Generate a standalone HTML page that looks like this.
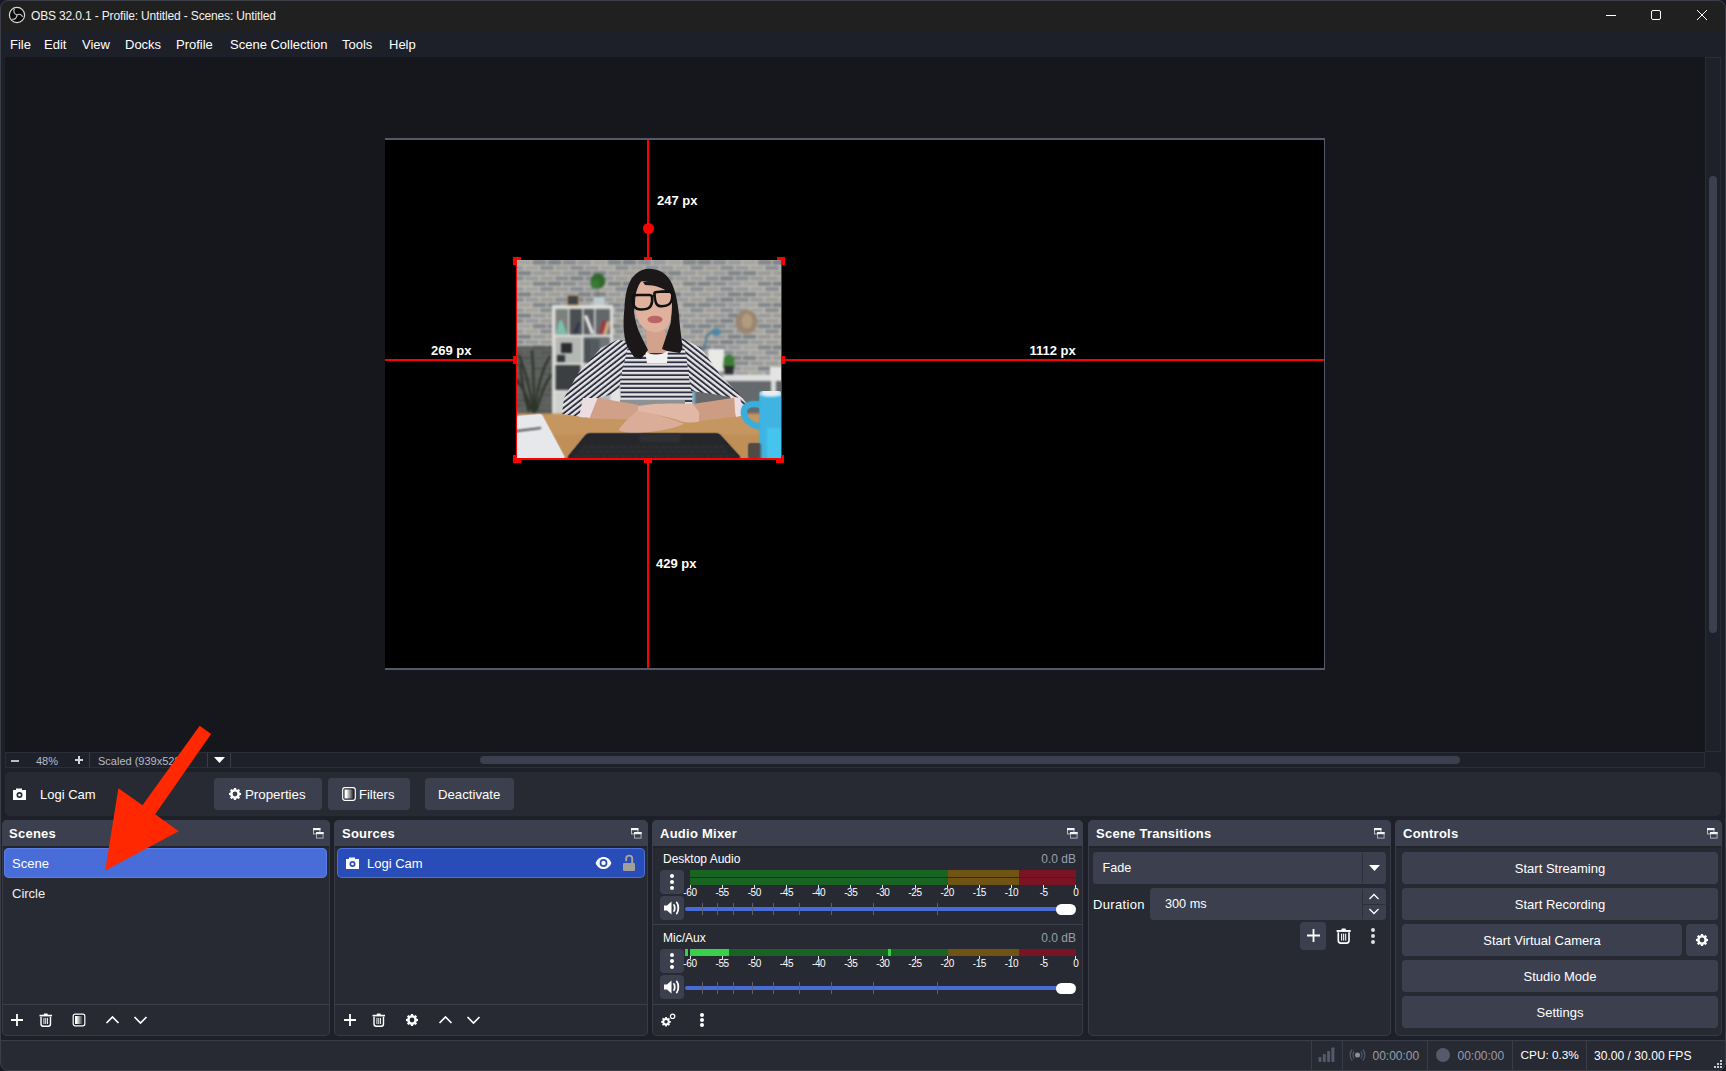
<!DOCTYPE html>
<html><head><meta charset="utf-8">
<style>
*{box-sizing:border-box;margin:0;padding:0}
html,body{width:1726px;height:1071px;overflow:hidden;background:#141828}
body{font-family:"Liberation Sans",sans-serif;color:#fff;position:relative}
.a{position:absolute}
.t{position:absolute;white-space:nowrap;line-height:1}
#win{left:0;top:0;width:1726px;height:1071px;background:#1e2029;border-radius:8px;overflow:hidden;}
.dock{position:absolute;background:#272a33;border-radius:5px;box-shadow:inset 0 0 0 1px #383b47;top:820px;height:216px}
.dh{position:absolute;left:0;top:0;right:0;height:26px;background:#3c404e;border-radius:5px 5px 0 0}
.dt{position:absolute;left:8px;top:827px;font-weight:bold;font-size:13px;letter-spacing:0.25px;line-height:1;white-space:nowrap}
.fl{position:absolute;top:8px;width:11px;height:11px}
.lbl{font-size:13px;font-weight:bold;color:#fff;text-shadow:0 0 1px #000}
.ml{font-size:10px;letter-spacing:-0.4px;color:#fff}
.btn{position:absolute;background:#3c404e;border-radius:4px}
.sep{position:absolute;background:#3a3d49}
.menu span{position:absolute;top:38px;font-size:13px;line-height:1;white-space:nowrap;color:#fff}
.cb{position:absolute;left:1402px;width:316px;height:32px;background:#3c404e;border-radius:4px;font-size:13px;line-height:32px;padding-top:0.5px;text-align:center;color:#fff}
</style></head>
<body>
<div id="win" class="a">
  <!-- title bar -->
  <div class="a" style="left:0;top:0;width:1726px;height:31px;background:#202020"></div>
  <svg class="a" style="left:8px;top:6px" width="18" height="18" viewBox="0 0 18 18">
    <circle cx="9" cy="9" r="7.6" fill="#0c0c0c" stroke="#d8d8d8" stroke-width="1.2"/>
    <path d="M9 9 C6 8 5 5 6.5 3 M9 9 C11 7.5 14 8.5 14.5 11 M9 9 C9 12 6.5 14 4 13" stroke="#cfcfcf" stroke-width="1.1" fill="none"/>
  </svg>
  <div class="t" style="left:31px;top:10px;font-size:12px;color:#f2f2f2;letter-spacing:-0.15px">OBS 32.0.1 - Profile: Untitled - Scenes: Untitled</div>
  <div class="a" style="left:1606px;top:15px;width:10px;height:1px;background:#fff"></div>
  <div class="a" style="left:1651px;top:10px;width:10px;height:10px;border:1px solid #fff;border-radius:2px"></div>
  <svg class="a" style="left:1696px;top:9px" width="12" height="12" viewBox="0 0 12 12"><path d="M1 1L11 11M11 1L1 11" stroke="#fff" stroke-width="1"/></svg>

  <!-- menu -->
  <div class="menu">
    <span style="left:10px">File</span><span style="left:44px">Edit</span><span style="left:82px">View</span><span style="left:125px">Docks</span><span style="left:176px">Profile</span><span style="left:230px">Scene Collection</span><span style="left:342px">Tools</span><span style="left:389px">Help</span>
  </div>

  <!-- preview -->
  <div class="a" style="left:5px;top:57px;width:1700px;height:695px;background:#16171c"></div>
  <div id="canvas" class="a" style="left:385px;top:138px;width:940px;height:532px;background:#000;border-top:2px solid #555866;border-right:1px solid #555866;border-bottom:2px solid #555866"></div>
    <!-- guides -->
  <div class="a" style="left:647px;top:140px;width:2px;height:120px;background:#f00"></div>
  <div class="a" style="left:647px;top:458px;width:2px;height:210px;background:#f00"></div>
  <div class="a" style="left:385px;top:359px;width:132px;height:2px;background:#f00"></div>
  <div class="a" style="left:781px;top:359px;width:543px;height:2px;background:#f00"></div>
  <div class="a" style="left:516px;top:260px;width:1px;height:198px;background:#f00"></div>
  <div class="a" style="left:781px;top:260px;width:1px;height:198px;background:#f00"></div>
  <div class="a" style="left:516px;top:458px;width:266px;height:2px;background:#f00"></div>
  <div class="a" style="left:643px;top:223px;width:11px;height:11px;border-radius:50%;background:#f00"></div>
  <div class="a" style="left:513px;top:257px;width:8px;height:8px;background:#f00"></div>
  <div class="a" style="left:644px;top:257px;width:8px;height:8px;background:#f00"></div>
  <div class="a" style="left:777px;top:257px;width:8px;height:8px;background:#f00"></div>
  <div class="a" style="left:513px;top:356px;width:8px;height:8px;background:#f00"></div>
  <div class="a" style="left:777px;top:356px;width:8px;height:8px;background:#f00"></div>
  <div class="a" style="left:513px;top:455px;width:8px;height:8px;background:#f00"></div>
  <div class="a" style="left:644px;top:455px;width:8px;height:8px;background:#f00"></div>
  <div class="a" style="left:776px;top:455px;width:8px;height:8px;background:#f00"></div>
<svg class="a" style="left:517px;top:260px" width="264" height="198" viewBox="0 0 264 198">
<defs>
<pattern id="brick" width="75" height="21.2" patternUnits="userSpaceOnUse"><rect width="75" height="21.2" fill="#cdc9bf"/><rect x="0.5" y="0.5" width="13.9" height="4.2" fill="#a3a29e"/><rect x="15.5" y="0.5" width="13.9" height="4.2" fill="#7d8388"/><rect x="30.5" y="0.5" width="13.9" height="4.2" fill="#7a7f84"/><rect x="45.5" y="0.5" width="13.9" height="4.2" fill="#868a8f"/><rect x="60.5" y="0.5" width="13.9" height="4.2" fill="#95979a"/><rect x="-7.0" y="5.8" width="13.9" height="4.2" fill="#95979a"/><rect x="8.0" y="5.8" width="13.9" height="4.2" fill="#a3a29e"/><rect x="23.0" y="5.8" width="13.9" height="4.2" fill="#868a8f"/><rect x="38.0" y="5.8" width="13.9" height="4.2" fill="#9c9a96"/><rect x="53.0" y="5.8" width="13.9" height="4.2" fill="#868a8f"/><rect x="68.0" y="5.8" width="13.9" height="4.2" fill="#95979a"/><rect x="0.5" y="11.1" width="13.9" height="4.2" fill="#7a7f84"/><rect x="15.5" y="11.1" width="13.9" height="4.2" fill="#95979a"/><rect x="30.5" y="11.1" width="13.9" height="4.2" fill="#9c9a96"/><rect x="45.5" y="11.1" width="13.9" height="4.2" fill="#95979a"/><rect x="60.5" y="11.1" width="13.9" height="4.2" fill="#7a7f84"/><rect x="-7.0" y="16.4" width="13.9" height="4.2" fill="#868a8f"/><rect x="8.0" y="16.4" width="13.9" height="4.2" fill="#95979a"/><rect x="23.0" y="16.4" width="13.9" height="4.2" fill="#9c9a96"/><rect x="38.0" y="16.4" width="13.9" height="4.2" fill="#868a8f"/><rect x="53.0" y="16.4" width="13.9" height="4.2" fill="#7a7f84"/><rect x="68.0" y="16.4" width="13.9" height="4.2" fill="#868a8f"/></pattern>
<pattern id="stripe" width="6" height="4.3" patternUnits="userSpaceOnUse">
<rect width="6" height="4.3" fill="#e6e4e6"/><rect y="2.4" width="6" height="1.9" fill="#2d3040"/>
</pattern>
<pattern id="stripeL" width="6" height="4.3" patternUnits="userSpaceOnUse" patternTransform="rotate(-38)">
<rect width="6" height="4.3" fill="#e6e4e6"/><rect y="2.4" width="6" height="1.9" fill="#2d3040"/>
</pattern>
<pattern id="stripeR" width="6" height="4.3" patternUnits="userSpaceOnUse" patternTransform="rotate(38)">
<rect width="6" height="4.3" fill="#e6e4e6"/><rect y="2.4" width="6" height="1.9" fill="#2d3040"/>
</pattern>
<filter id="bl" x="0" y="0" width="1" height="1" color-interpolation-filters="sRGB"><feGaussianBlur stdDeviation="0.8"/><feComponentTransfer><feFuncA type="linear" slope="3"/></feComponentTransfer></filter>
</defs>
<g filter="url(#bl)">
<rect width="264" height="198" fill="url(#brick)"/>
<!-- left shadow / plant -->
<rect x="0" y="86" width="36" height="68" fill="#3f4341" opacity="0.7"/>
<path d="M16 153 C14 130 8 110 2 95 M18 153 C20 125 26 108 33 96 M14 150 C10 135 4 125 0 120 M20 150 C24 132 30 120 35 114 M17 153 C17 125 16 105 15 90 M12 152 C8 140 6 130 3 104" stroke="#2c3328" stroke-width="2.2" fill="none"/>
<!-- bookshelf -->
<rect x="35" y="45" width="61" height="109" fill="#dcdcd8"/>
<rect x="38.5" y="49" width="12.5" height="25.5" fill="#7c807e"/>
<rect x="52.5" y="49" width="12.5" height="25.5" fill="#4a4e50"/>
<rect x="66.5" y="49" width="10.5" height="25.5" fill="#585c5d"/>
<rect x="78.5" y="49" width="14.5" height="25.5" fill="#63676a"/>
<path d="M39 74 L42 61 L45 60 L50 74Z" fill="#7cc0ae"/>
<path d="M56 74 L61 62 L63 63 L60 74Z" fill="#2e3450"/>
<path d="M67 56 L70 55 L77 73 L74 74Z" fill="#ececf0"/>
<path d="M82 74 L86 60 L89 61 L86 74Z" fill="#a8323c"/><path d="M86 74 L90 61 L93 62 L90 74Z" fill="#cfae7e"/>
<rect x="38.5" y="77" width="26" height="26" fill="#b4b7b4"/>
<rect x="44" y="83" width="11" height="10" fill="#2a2c2e"/>
<rect x="40" y="95" width="8" height="7" fill="#34373a"/>
<rect x="66.5" y="77" width="26.5" height="26" fill="#6f7476"/>
<rect x="67" y="79" width="7.5" height="24" fill="#4a5054"/><rect x="75" y="79" width="7.5" height="24" fill="#525a5e"/>
<rect x="38.5" y="105" width="25" height="25" fill="#3b3f42"/>
<rect x="38.5" y="132" width="25" height="22" fill="#cfd1ce"/>
<rect x="66.5" y="105" width="26.5" height="49" fill="#b3b7b5"/>
<!-- top plant + frame -->
<circle cx="81" cy="21" r="7.5" fill="#2f6a2c"/><circle cx="78" cy="24" r="4.5" fill="#3a7a33"/>
<rect x="80.5" y="28" width="1" height="9" fill="#6a6a5a"/>
<rect x="76.5" y="37" width="11" height="8" fill="#bccdd0"/>
<rect x="50.5" y="35.5" width="11" height="9.5" fill="#3e4245" stroke="#b8905a" stroke-width="1"/>
<!-- hat -->
<ellipse cx="229.5" cy="62" rx="11" ry="12" fill="#9a8570"/><ellipse cx="230" cy="61" rx="5.5" ry="7.5" fill="#b39b80"/>
<!-- lamp -->
<path d="M186 92 L190 75 L197 71" stroke="#3a7090" stroke-width="1.5" fill="none"/><ellipse cx="199" cy="72" rx="5" ry="3.5" fill="#4a86a8"/>
<!-- right table area -->
<rect x="168" y="119" width="96" height="35" fill="#66696b"/>
<rect x="168" y="115" width="10" height="30" fill="#80b2cc"/>
<rect x="191" y="89" width="16" height="22" fill="#e9e9e6"/>
<path d="M206 108 L207 97 L212 94 L217 97 L218 108Z" fill="#3c7c34"/><rect x="207.5" y="106" width="9" height="9" fill="#2a2c2e"/>
<rect x="206" y="114.5" width="58" height="6.5" fill="#dedede"/>
<rect x="253" y="107" width="11" height="14" fill="#e4e4e4"/>
<rect x="254" y="121" width="5" height="33" fill="#d8d8d8"/>
<!-- chair bits -->
<rect x="94" y="128" width="10" height="15" rx="2" fill="#e4e4e4"/>
<!-- desk -->
<rect x="0" y="153.5" width="264" height="44.5" fill="#c5965f"/>
<rect x="0" y="175" width="264" height="23" fill="#bd8a54" opacity="0.7"/>
</g>
<!-- body -->
<path d="M100 82 L112 80 L128 88 L152 89 L160 80 L172 84 L176 110 L175 146 L133 147 L104 147 L103 110Z" fill="url(#stripe)"/>
<path d="M45 154 L47 138 L62 112 L84 88 L101 79.5 L112 82 L108 100 L106 107 L102 128 L96 134 L81 138 L73 158Z" fill="url(#stripeL)"/>
<path d="M160 80 L166 78.5 L184 88 L204 116 L222 134 L231 145 L228 155 L219 156 L213 137 L196 134 L174 131 L170.5 106 L168 90Z" fill="url(#stripeR)"/>
<path d="M66 138 L81 138 L74 158 L62 157Z" fill="#ecdde0"/>
<path d="M213 136 L223 138 L228 155 L219 157Z" fill="#ecdde0"/>
<!-- forearms + hands -->
<rect x="103" y="140" width="65" height="8" fill="#8f9294"/>
<path d="M80.7 137.7 L121.4 145 L123 152 L115 159.6 L72.4 158.6 Z" fill="#d0a088"/>
<path d="M217.3 137.7 L175.6 144 L172 152 L177.7 161.7 L218.4 156.5 Z" fill="#cd9d83"/>
<path d="M121 150 C130 152 150 157 167 163.8 C160 168 140 172 119.3 173.2 C112 173 104 172 101.6 170 C106 163 114 156 121 150Z" fill="#d9ad97"/>
<path d="M121 146 C135 143 160 143 176 144 L182 152 L182 161.7 C175 163 168 163 160 160 C148 156 132 153 121 151Z" fill="#e0b8a5"/>
<!-- neck + tee -->
<path d="M129 70 L148 70 L150 93 L130 93Z" fill="#d3a28c"/>
<path d="M128 91 C134 96 146 96 151 90 L150 103 L130 103Z" fill="#f2f1f1"/>
<!-- hair -->
<path d="M131 8.7 C140 8.5 148 12 153 20 C159 30 161 45 162 55 C163 70 165 80 165.5 88 L163 93 L150 91 L145 89 L154 62 L155 40 C150 28 140 22 128 22 C121 30 117 42 117 52 C118 60 120 68 124 76 L131 90 L124 99 L117 97 L110 86 C106 75 106 60 107.5 48 C108 35 110 26 115 18 C120 12 125 9 131 8.7Z" fill="#1c1819"/>
<!-- face -->
<path d="M124 21.5 C134 20 148 24 154 32 C155.5 45 155 58 152 64 C148 71 141 73 136 72 C128 71 121 64 119 54 C117 42 118 30 124 21.5Z" fill="#e0b19c"/>
<path d="M126 22 C136 19 148 22 155 31 L156 36 C148 28 138 25 128 25Z" fill="#1c1819"/>
<!-- glasses -->
<path d="M115.5 37 C115 35 117 35 122 35 L133 35 C135 35 135.5 37 135 42 C134 48 131 49.5 124 49.5 C118 49.5 116 47 115.5 37Z" fill="none" stroke="#121212" stroke-width="2.6"/>
<path d="M137.5 34 C137 32 139 32 144 31.6 L153 31.4 C155 31.4 155.6 33 155.2 38 C154.6 44 151.5 46 145 46.2 C140 46.4 138 44 137.5 34Z" fill="none" stroke="#121212" stroke-width="2.6"/>
<path d="M134.5 37 L137.5 35" stroke="#121212" stroke-width="2"/>
<ellipse cx="138" cy="59.5" rx="7.5" ry="3.8" fill="#bb6465"/>
<g filter="url(#bl)">
<!-- notebook -->
<path d="M0 157 L24 155 L46 196 L47 198 L0 198Z" fill="#e7e8ec"/>
<path d="M0 171 L24 168" stroke="#1a1a1a" stroke-width="1.6"/>
<!-- laptop -->
<path d="M51 198 L69 176 C70 174.8 71 174.2 73 174.2 L199 174.2 C201 174.2 202 174.8 203 176 L223 198Z" fill="#25272b"/>
<rect x="122.4" y="174.7" width="40.6" height="7.3" fill="#2e3033"/>
<path d="M66 187 H207 M62 191.5 H211 M58 196 H216" stroke="#34373a" stroke-width="1.4" stroke-dasharray="5 1.5"/>
<!-- cup -->
<path d="M244 145 C221 139 221 163 244 167" stroke="#3aaedb" stroke-width="4" fill="none"/>
<rect x="243.5" y="132" width="20.5" height="66" fill="#3fb4e2"/>
<ellipse cx="254" cy="134" rx="10.5" ry="2.8" fill="#e9eef0"/>
<rect x="250" y="168" width="14" height="30" fill="#47c9f0" opacity="0.8"/>
<rect x="232" y="184" width="12" height="14" fill="#4f4a44" opacity="0.8"/>
</g>
</svg>


    <div class="t lbl" style="left:657px;top:193.7px">247 px</div>
  <div class="t lbl" style="left:431px;top:343.5px">269 px</div>
  <div class="t lbl" style="left:1029.5px;top:343.5px">1112 px</div>
  <div class="t lbl" style="left:656px;top:556.5px">429 px</div>
<!-- vertical scrollbar -->
  <div class="a" style="left:1705px;top:57px;width:16px;height:695px;background:#1f212a;box-shadow:inset 0 0 0 1px #2a2d37"></div>
  <div class="a" style="left:1709px;top:176px;width:8px;height:457px;background:#3c404e;border-radius:4px"></div>

  <!-- zoom bar -->
  <div class="a" style="left:5px;top:752px;width:1700px;height:16px;background:#1f212a;box-shadow:inset 0 0 0 1px #2b2e38"></div>
  <div class="sep" style="left:89px;top:753px;width:1px;height:14px"></div>
  <div class="sep" style="left:207px;top:753px;width:1px;height:14px"></div>
  <div class="sep" style="left:230px;top:753px;width:1px;height:14px"></div>
  <div class="a" style="left:11px;top:759.5px;width:8px;height:2px;background:#b8bcc6"></div>
  <div class="t" style="left:36px;top:756px;font-size:11px;color:#b8bcc8">48%</div>
  <div class="a" style="left:75px;top:759.3px;width:8px;height:1.5px;background:#d0d4dc"></div>
  <div class="a" style="left:78.3px;top:756px;width:1.5px;height:8px;background:#d0d4dc"></div>
  <div class="t" style="left:98px;top:756px;font-size:11px;color:#b8bcc8">Scaled (939x528)</div>
  <svg class="a" style="left:214px;top:757px" width="11" height="7"><path d="M0 0H11L5.5 6Z" fill="#fff"/></svg>
  <div class="a" style="left:480px;top:756px;width:980px;height:8px;background:#3c404e;border-radius:4px"></div>

  <!-- source toolbar -->
  <div class="a" style="left:5px;top:772px;width:1716px;height:44px;background:#272a33;border-radius:5px"></div>
  <svg class="a" style="left:12px;top:787px" width="15" height="14" viewBox="0 0 15 14"><path d="M4 1.5H10V3H14V13H1V3H4Z" fill="#fff"/><circle cx="7.5" cy="8" r="3" fill="#272a33"/><circle cx="7.5" cy="8" r="1.3" fill="#fff"/></svg>
  <div class="t" style="left:40px;top:788px;font-size:13px">Logi Cam</div>
  <div class="btn" style="left:214px;top:778px;width:108px;height:32px"></div>
  <div class="btn" style="left:328px;top:778px;width:82px;height:32px"></div>
  <div class="btn" style="left:425px;top:778px;width:89px;height:32px"></div>
  <div class="t" style="left:245px;top:788px;font-size:13.3px">Properties</div>
  <div class="t" style="left:359px;top:788px;font-size:13px">Filters</div>
  <div class="t" style="left:438px;top:788px;font-size:13.2px">Deactivate</div>

  <svg class="a" style="left:228px;top:787px" width="14" height="14" viewBox="0 0 14 14"><path fill="#fff" fill-rule="evenodd" d="M5.87 2.28 L5.92 0.95 L8.08 0.95 L8.13 2.28 L9.53 2.86 L10.52 1.95 L12.05 3.48 L11.14 4.47 L11.72 5.87 L13.05 5.92 L13.05 8.08 L11.72 8.13 L11.14 9.53 L12.05 10.52 L10.52 12.05 L9.53 11.14 L8.13 11.72 L8.08 13.05 L5.92 13.05 L5.87 11.72 L4.47 11.14 L3.48 12.05 L1.95 10.52 L2.86 9.53 L2.28 8.13 L0.95 8.08 L0.95 5.92 L2.28 5.87 L2.86 4.47 L1.95 3.48 L3.48 1.95 L4.47 2.86Z M9.40 7.00 A2.4 2.4 0 1 0 4.60 7.00 A2.4 2.4 0 1 0 9.40 7.00Z"/></svg>
  <svg class="a" style="left:342px;top:787px" width="14" height="14" viewBox="0 0 14 14"><defs><linearGradient id="fg2" x1="0" x2="1"><stop offset="0" stop-color="#fff"/><stop offset="0.2" stop-color="#fff"/><stop offset="1" stop-color="#fff" stop-opacity="0"/></linearGradient></defs><rect x="0.7" y="0.7" width="12.6" height="12.6" rx="2.2" fill="#22242b" stroke="#fff" stroke-width="1.2"/><rect x="2.5" y="2.5" width="9" height="9" fill="url(#fg2)"/></svg>
  <!-- docks -->
  <div class="dock" style="left:2px;width:328px"><div class="dh"></div></div>
  <div class="dock" style="left:334px;width:314px"><div class="dh"></div></div>
  <div class="dock" style="left:652px;width:431px"><div class="dh"></div></div>
  <div class="dock" style="left:1088px;width:303px"><div class="dh"></div></div>
  <div class="dock" style="left:1395px;width:327px"><div class="dh"></div></div>
  <div class="dt" style="left:9px">Scenes</div>
  <div class="dt" style="left:342px">Sources</div>
  <div class="dt" style="left:660px">Audio Mixer</div>
  <div class="dt" style="left:1096px">Scene Transitions</div>
  <div class="dt" style="left:1403px">Controls</div>

  <!-- float icons -->
  <svg class="a fli" style="left:313px;top:828px" width="11" height="11" viewBox="0 0 11 11"><rect x="0.5" y="0.5" width="6.4" height="5.4" fill="none" stroke="#b8bcc8" stroke-width="1"/><rect x="0" y="0" width="7.4" height="2.2" fill="#f4f4f4"/><rect x="3.5" y="4.5" width="6.6" height="5.6" fill="#3c404e" stroke="#a8acb8" stroke-width="1"/><rect x="3" y="4" width="7.6" height="2.2" fill="#f4f4f4"/></svg>
  <svg class="a fli" style="left:631px;top:828px" width="11" height="11" viewBox="0 0 11 11"><rect x="0.5" y="0.5" width="6.4" height="5.4" fill="none" stroke="#b8bcc8" stroke-width="1"/><rect x="0" y="0" width="7.4" height="2.2" fill="#f4f4f4"/><rect x="3.5" y="4.5" width="6.6" height="5.6" fill="#3c404e" stroke="#a8acb8" stroke-width="1"/><rect x="3" y="4" width="7.6" height="2.2" fill="#f4f4f4"/></svg>
  <svg class="a fli" style="left:1067px;top:828px" width="11" height="11" viewBox="0 0 11 11"><rect x="0.5" y="0.5" width="6.4" height="5.4" fill="none" stroke="#b8bcc8" stroke-width="1"/><rect x="0" y="0" width="7.4" height="2.2" fill="#f4f4f4"/><rect x="3.5" y="4.5" width="6.6" height="5.6" fill="#3c404e" stroke="#a8acb8" stroke-width="1"/><rect x="3" y="4" width="7.6" height="2.2" fill="#f4f4f4"/></svg>
  <svg class="a fli" style="left:1374px;top:828px" width="11" height="11" viewBox="0 0 11 11"><rect x="0.5" y="0.5" width="6.4" height="5.4" fill="none" stroke="#b8bcc8" stroke-width="1"/><rect x="0" y="0" width="7.4" height="2.2" fill="#f4f4f4"/><rect x="3.5" y="4.5" width="6.6" height="5.6" fill="#3c404e" stroke="#a8acb8" stroke-width="1"/><rect x="3" y="4" width="7.6" height="2.2" fill="#f4f4f4"/></svg>
  <svg class="a fli" style="left:1707px;top:828px" width="11" height="11" viewBox="0 0 11 11"><rect x="0.5" y="0.5" width="6.4" height="5.4" fill="none" stroke="#b8bcc8" stroke-width="1"/><rect x="0" y="0" width="7.4" height="2.2" fill="#f4f4f4"/><rect x="3.5" y="4.5" width="6.6" height="5.6" fill="#3c404e" stroke="#a8acb8" stroke-width="1"/><rect x="3" y="4" width="7.6" height="2.2" fill="#f4f4f4"/></svg>
  <!-- header bottom dark lines -->
  <div class="a" style="left:3px;top:846px;width:326px;height:2px;background:#22242c"></div>
  <div class="a" style="left:335px;top:846px;width:312px;height:2px;background:#22242c"></div>
  <div class="a" style="left:653px;top:846px;width:429px;height:2px;background:#22242c"></div>
  <div class="a" style="left:1089px;top:846px;width:301px;height:2px;background:#22242c"></div>
  <div class="a" style="left:1396px;top:846px;width:325px;height:2px;background:#22242c"></div>

  <!-- scenes -->
  <div class="a" style="left:4px;top:848px;width:323px;height:30px;background:#486cd8;border-radius:5px;box-shadow:inset 0 0 0 1px #5b7fe6"></div>
  <div class="t" style="left:12px;top:857px;font-size:13px">Scene</div>
  <div class="t" style="left:12px;top:887px;font-size:13px;color:#f0f0f0">Circle</div>
  <div class="a" style="left:3px;top:1004px;width:326px;height:1px;background:#3c3f4b"></div>
  <svg class="a" style="left:10px;top:1013px" width="14" height="14" viewBox="0 0 14 14"><path d="M7 1V13M1 7H13" stroke="#fff" stroke-width="1.8"/></svg>
  <svg class="a" style="left:38.5px;top:1013px" width="13.5" height="14" viewBox="0 0 16 16" preserveAspectRatio="none"><rect x="0.6" y="2" width="14.8" height="1.9" fill="#fff"/><rect x="5.6" y="0.6" width="4.8" height="1.8" rx="0.8" fill="#fff"/><path d="M2.4 4.2V12.6C2.4 14.2 3.4 15.1 5 15.1H11C12.6 15.1 13.6 14.2 13.6 12.6V4.2" stroke="#fff" stroke-width="1.7" fill="none"/><rect x="5.3" y="5.6" width="1.1" height="7" fill="#fff"/><rect x="7.45" y="5.6" width="1.1" height="7" fill="#fff"/><rect x="9.6" y="5.6" width="1.1" height="7" fill="#fff"/></svg>
  <svg class="a" style="left:72px;top:1013px" width="14" height="14" viewBox="0 0 14 14"><defs><linearGradient id="fg" x1="0" x2="1"><stop offset="0" stop-color="#fff"/><stop offset="0.2" stop-color="#fff"/><stop offset="1" stop-color="#fff" stop-opacity="0"/></linearGradient></defs><rect x="1.2" y="1.2" width="11.6" height="11.6" rx="2" fill="#1c1e24" stroke="#fff" stroke-width="1.2"/><rect x="3" y="3" width="8" height="8" fill="url(#fg)"/></svg>
  <svg class="a" style="left:105px;top:1015px" width="15" height="10" viewBox="0 0 15 10"><path d="M1.5 8L7.5 2L13.5 8" stroke="#fff" stroke-width="1.7" fill="none"/></svg>
  <svg class="a" style="left:133px;top:1015px" width="15" height="10" viewBox="0 0 15 10"><path d="M1.5 2L7.5 8L13.5 2" stroke="#fff" stroke-width="1.7" fill="none"/></svg>

  <!-- sources -->
  <div class="a" style="left:337px;top:848px;width:308px;height:30px;background:#284cb8;border-radius:5px;box-shadow:inset 0 0 0 1px #4d6fd6"></div>
  <svg class="a" style="left:345px;top:856px" width="15" height="14" viewBox="0 0 15 14"><path d="M4 1.5H10V3H14V13H1V3H4Z" fill="#fff"/><circle cx="7.5" cy="8" r="3" fill="#284cb8"/><circle cx="7.5" cy="8" r="1.3" fill="#fff"/></svg>
  <div class="t" style="left:367px;top:857px;font-size:13px">Logi Cam</div>
  <svg class="a" style="left:594.5px;top:856px" width="17" height="14" viewBox="0 0 17 14"><path d="M0.6 7C2.5 2.2 5.8 0.9 8.5 0.9S14.5 2.2 16.4 7C14.5 11.8 11.2 13.1 8.5 13.1S2.5 11.8 0.6 7Z" fill="#fff"/><circle cx="8.5" cy="7" r="3.9" fill="#284cb8"/><circle cx="8.5" cy="7" r="2.2" fill="#fff"/></svg>
  <svg class="a" style="left:622px;top:854px" width="14" height="18" viewBox="0 0 14 18"><path d="M4.2 7.2V4.6C4.2 2.6 5.4 1.6 7.2 1.6S10.2 2.6 10.2 4.6V9.5" stroke="#aba792" stroke-width="1.9" fill="none"/><rect x="1" y="9" width="12" height="8" rx="1" fill="#a19f98"/></svg>
  <div class="a" style="left:335px;top:1004px;width:312px;height:1px;background:#3c3f4b"></div>
  <svg class="a" style="left:343px;top:1013px" width="14" height="14" viewBox="0 0 14 14"><path d="M7 1V13M1 7H13" stroke="#fff" stroke-width="1.8"/></svg>
  <svg class="a" style="left:371.5px;top:1013px" width="13.5" height="14" viewBox="0 0 16 16" preserveAspectRatio="none"><rect x="0.6" y="2" width="14.8" height="1.9" fill="#fff"/><rect x="5.6" y="0.6" width="4.8" height="1.8" rx="0.8" fill="#fff"/><path d="M2.4 4.2V12.6C2.4 14.2 3.4 15.1 5 15.1H11C12.6 15.1 13.6 14.2 13.6 12.6V4.2" stroke="#fff" stroke-width="1.7" fill="none"/><rect x="5.3" y="5.6" width="1.1" height="7" fill="#fff"/><rect x="7.45" y="5.6" width="1.1" height="7" fill="#fff"/><rect x="9.6" y="5.6" width="1.1" height="7" fill="#fff"/></svg>
  <svg class="a" style="left:405px;top:1013px" width="14" height="14" viewBox="0 0 14 14"><path fill="#fff" fill-rule="evenodd" d="M5.87 2.28 L5.92 0.95 L8.08 0.95 L8.13 2.28 L9.53 2.86 L10.52 1.95 L12.05 3.48 L11.14 4.47 L11.72 5.87 L13.05 5.92 L13.05 8.08 L11.72 8.13 L11.14 9.53 L12.05 10.52 L10.52 12.05 L9.53 11.14 L8.13 11.72 L8.08 13.05 L5.92 13.05 L5.87 11.72 L4.47 11.14 L3.48 12.05 L1.95 10.52 L2.86 9.53 L2.28 8.13 L0.95 8.08 L0.95 5.92 L2.28 5.87 L2.86 4.47 L1.95 3.48 L3.48 1.95 L4.47 2.86Z M9.40 7.00 A2.4 2.4 0 1 0 4.60 7.00 A2.4 2.4 0 1 0 9.40 7.00Z"/></svg>
  <svg class="a" style="left:438px;top:1015px" width="15" height="10" viewBox="0 0 15 10"><path d="M1.5 8L7.5 2L13.5 8" stroke="#fff" stroke-width="1.7" fill="none"/></svg>
  <svg class="a" style="left:466px;top:1015px" width="15" height="10" viewBox="0 0 15 10"><path d="M1.5 2L7.5 8L13.5 2" stroke="#fff" stroke-width="1.7" fill="none"/></svg>
  <!-- audio mixer -->
<div class="t" style="left:663px;top:852.8px;font-size:12px">Desktop Audio</div>
<div class="t" style="left:1000px;top:852.8px;width:76px;text-align:right;font-size:12px;color:#9a9eab">0.0 dB</div>
<div class="btn" style="left:660px;top:870px;width:24px;height:24px"></div>
<div class="a" style="left:669.8px;top:873.8px;width:4.3px;height:4.3px;border-radius:50%;background:#fff"></div>
<div class="a" style="left:669.8px;top:879.8px;width:4.3px;height:4.3px;border-radius:50%;background:#fff"></div>
<div class="a" style="left:669.8px;top:885.8px;width:4.3px;height:4.3px;border-radius:50%;background:#fff"></div>
<div class="btn" style="left:660px;top:896px;width:24px;height:24px"></div>
<svg class="a" style="left:663px;top:900px" width="18" height="16" viewBox="0 0 18 16"><path d="M1 5.5H4L8.5 1.5V14.5L4 10.5H1Z" fill="#fff"/><path d="M11 5C12 6.2 12 9.8 11 11" stroke="#fff" stroke-width="1.8" fill="none" stroke-linecap="round"/><path d="M13.8 2.5C15.8 5 15.8 11 13.8 13.5" stroke="#fff" stroke-width="1.8" fill="none" stroke-linecap="round"/></svg>
<div class="a" style="left:690px;top:870px;width:258px;height:7px;background:#1a6423"></div>
<div class="a" style="left:948px;top:870px;width:71px;height:7px;background:#705414"></div>
<div class="a" style="left:1019px;top:870px;width:57px;height:7px;background:#7a1424"></div>
<div class="a" style="left:690px;top:878px;width:258px;height:7px;background:#1a6423"></div>
<div class="a" style="left:948px;top:878px;width:71px;height:7px;background:#705414"></div>
<div class="a" style="left:1019px;top:878px;width:57px;height:7px;background:#7a1424"></div>
<div class="a" style="left:689.5px;top:885px;width:1px;height:3px;background:#e8e8e8"></div>
<div class="t ml" style="left:670.0px;top:887.5px;width:40px;text-align:center">-60</div>
<div class="a" style="left:721.6px;top:885px;width:1px;height:3px;background:#e8e8e8"></div>
<div class="t ml" style="left:702.1px;top:887.5px;width:40px;text-align:center">-55</div>
<div class="a" style="left:753.8px;top:885px;width:1px;height:3px;background:#e8e8e8"></div>
<div class="t ml" style="left:734.3px;top:887.5px;width:40px;text-align:center">-50</div>
<div class="a" style="left:786.0px;top:885px;width:1px;height:3px;background:#e8e8e8"></div>
<div class="t ml" style="left:766.5px;top:887.5px;width:40px;text-align:center">-45</div>
<div class="a" style="left:818.1px;top:885px;width:1px;height:3px;background:#e8e8e8"></div>
<div class="t ml" style="left:798.6px;top:887.5px;width:40px;text-align:center">-40</div>
<div class="a" style="left:850.2px;top:885px;width:1px;height:3px;background:#e8e8e8"></div>
<div class="t ml" style="left:830.8px;top:887.5px;width:40px;text-align:center">-35</div>
<div class="a" style="left:882.4px;top:885px;width:1px;height:3px;background:#e8e8e8"></div>
<div class="t ml" style="left:862.9px;top:887.5px;width:40px;text-align:center">-30</div>
<div class="a" style="left:914.5px;top:885px;width:1px;height:3px;background:#e8e8e8"></div>
<div class="t ml" style="left:895.0px;top:887.5px;width:40px;text-align:center">-25</div>
<div class="a" style="left:946.7px;top:885px;width:1px;height:3px;background:#e8e8e8"></div>
<div class="t ml" style="left:927.2px;top:887.5px;width:40px;text-align:center">-20</div>
<div class="a" style="left:978.9px;top:885px;width:1px;height:3px;background:#e8e8e8"></div>
<div class="t ml" style="left:959.4px;top:887.5px;width:40px;text-align:center">-15</div>
<div class="a" style="left:1011.0px;top:885px;width:1px;height:3px;background:#e8e8e8"></div>
<div class="t ml" style="left:991.5px;top:887.5px;width:40px;text-align:center">-10</div>
<div class="a" style="left:1043.2px;top:885px;width:1px;height:3px;background:#e8e8e8"></div>
<div class="t ml" style="left:1023.7px;top:887.5px;width:40px;text-align:center">-5</div>
<div class="a" style="left:1075.3px;top:885px;width:1px;height:3px;background:#e8e8e8"></div>
<div class="t ml" style="left:1055.8px;top:887.5px;width:40px;text-align:center">0</div>
<div class="a" style="left:685px;top:907px;width:380px;height:4px;background:#476bd7;border-radius:2px"></div>
<div class="a" style="left:701.8px;top:903px;width:1px;height:12px;background:#5c606e"></div>
<div class="a" style="left:717.0px;top:903px;width:1px;height:12px;background:#5c606e"></div>
<div class="a" style="left:732.9px;top:903px;width:1px;height:12px;background:#5c606e"></div>
<div class="a" style="left:752.0px;top:903px;width:1px;height:12px;background:#5c606e"></div>
<div class="a" style="left:772.9px;top:903px;width:1px;height:12px;background:#5c606e"></div>
<div class="a" style="left:798.9px;top:903px;width:1px;height:12px;background:#5c606e"></div>
<div class="a" style="left:831.0px;top:903px;width:1px;height:12px;background:#5c606e"></div>
<div class="a" style="left:872.8px;top:903px;width:1px;height:12px;background:#5c606e"></div>
<div class="a" style="left:936.8px;top:903px;width:1px;height:12px;background:#5c606e"></div>
<div class="a" style="left:1056px;top:903.5px;width:20px;height:11px;background:#fff;border-radius:5.5px"></div>
<div class="a" style="left:653px;top:924px;width:429px;height:1px;background:#3c3f4b"></div>
<div class="t" style="left:663px;top:931.6px;font-size:12px">Mic/Aux</div>
<div class="t" style="left:1000px;top:931.6px;width:76px;text-align:right;font-size:12px;color:#9a9eab">0.0 dB</div>
<div class="btn" style="left:660px;top:949px;width:24px;height:24px"></div>
<div class="a" style="left:669.8px;top:952.8px;width:4.3px;height:4.3px;border-radius:50%;background:#fff"></div>
<div class="a" style="left:669.8px;top:958.8px;width:4.3px;height:4.3px;border-radius:50%;background:#fff"></div>
<div class="a" style="left:669.8px;top:964.8px;width:4.3px;height:4.3px;border-radius:50%;background:#fff"></div>
<div class="btn" style="left:660px;top:975px;width:24px;height:24px"></div>
<svg class="a" style="left:663px;top:979px" width="18" height="16" viewBox="0 0 18 16"><path d="M1 5.5H4L8.5 1.5V14.5L4 10.5H1Z" fill="#fff"/><path d="M11 5C12 6.2 12 9.8 11 11" stroke="#fff" stroke-width="1.8" fill="none" stroke-linecap="round"/><path d="M13.8 2.5C15.8 5 15.8 11 13.8 13.5" stroke="#fff" stroke-width="1.8" fill="none" stroke-linecap="round"/></svg>
<div class="a" style="left:690px;top:949px;width:258px;height:7px;background:#1a6423"></div>
<div class="a" style="left:948px;top:949px;width:71px;height:7px;background:#705414"></div>
<div class="a" style="left:1019px;top:949px;width:57px;height:7px;background:#7a1424"></div>
<div class="a" style="left:685px;top:949px;width:3px;height:7px;background:#3ad14a"></div>
<div class="a" style="left:690px;top:949px;width:39px;height:7px;background:#3ad14a"></div>
<div class="a" style="left:888px;top:949px;width:3px;height:7px;background:#3ad14a"></div>
<div class="a" style="left:689.5px;top:956px;width:1px;height:3px;background:#e8e8e8"></div>
<div class="t ml" style="left:670.0px;top:958.5px;width:40px;text-align:center">-60</div>
<div class="a" style="left:721.6px;top:956px;width:1px;height:3px;background:#e8e8e8"></div>
<div class="t ml" style="left:702.1px;top:958.5px;width:40px;text-align:center">-55</div>
<div class="a" style="left:753.8px;top:956px;width:1px;height:3px;background:#e8e8e8"></div>
<div class="t ml" style="left:734.3px;top:958.5px;width:40px;text-align:center">-50</div>
<div class="a" style="left:786.0px;top:956px;width:1px;height:3px;background:#e8e8e8"></div>
<div class="t ml" style="left:766.5px;top:958.5px;width:40px;text-align:center">-45</div>
<div class="a" style="left:818.1px;top:956px;width:1px;height:3px;background:#e8e8e8"></div>
<div class="t ml" style="left:798.6px;top:958.5px;width:40px;text-align:center">-40</div>
<div class="a" style="left:850.2px;top:956px;width:1px;height:3px;background:#e8e8e8"></div>
<div class="t ml" style="left:830.8px;top:958.5px;width:40px;text-align:center">-35</div>
<div class="a" style="left:882.4px;top:956px;width:1px;height:3px;background:#e8e8e8"></div>
<div class="t ml" style="left:862.9px;top:958.5px;width:40px;text-align:center">-30</div>
<div class="a" style="left:914.5px;top:956px;width:1px;height:3px;background:#e8e8e8"></div>
<div class="t ml" style="left:895.0px;top:958.5px;width:40px;text-align:center">-25</div>
<div class="a" style="left:946.7px;top:956px;width:1px;height:3px;background:#e8e8e8"></div>
<div class="t ml" style="left:927.2px;top:958.5px;width:40px;text-align:center">-20</div>
<div class="a" style="left:978.9px;top:956px;width:1px;height:3px;background:#e8e8e8"></div>
<div class="t ml" style="left:959.4px;top:958.5px;width:40px;text-align:center">-15</div>
<div class="a" style="left:1011.0px;top:956px;width:1px;height:3px;background:#e8e8e8"></div>
<div class="t ml" style="left:991.5px;top:958.5px;width:40px;text-align:center">-10</div>
<div class="a" style="left:1043.2px;top:956px;width:1px;height:3px;background:#e8e8e8"></div>
<div class="t ml" style="left:1023.7px;top:958.5px;width:40px;text-align:center">-5</div>
<div class="a" style="left:1075.3px;top:956px;width:1px;height:3px;background:#e8e8e8"></div>
<div class="t ml" style="left:1055.8px;top:958.5px;width:40px;text-align:center">0</div>
<div class="a" style="left:685px;top:986px;width:380px;height:4px;background:#476bd7;border-radius:2px"></div>
<div class="a" style="left:701.8px;top:982px;width:1px;height:12px;background:#5c606e"></div>
<div class="a" style="left:717.0px;top:982px;width:1px;height:12px;background:#5c606e"></div>
<div class="a" style="left:732.9px;top:982px;width:1px;height:12px;background:#5c606e"></div>
<div class="a" style="left:752.0px;top:982px;width:1px;height:12px;background:#5c606e"></div>
<div class="a" style="left:772.9px;top:982px;width:1px;height:12px;background:#5c606e"></div>
<div class="a" style="left:798.9px;top:982px;width:1px;height:12px;background:#5c606e"></div>
<div class="a" style="left:831.0px;top:982px;width:1px;height:12px;background:#5c606e"></div>
<div class="a" style="left:872.8px;top:982px;width:1px;height:12px;background:#5c606e"></div>
<div class="a" style="left:936.8px;top:982px;width:1px;height:12px;background:#5c606e"></div>
<div class="a" style="left:1056px;top:982.5px;width:20px;height:11px;background:#fff;border-radius:5.5px"></div>
<div class="a" style="left:653px;top:1004px;width:429px;height:1px;background:#3c3f4b"></div>
<svg class="a" style="left:661px;top:1013px" width="15" height="14" viewBox="0 0 15 14"><path fill="#fff" fill-rule="evenodd" d="M4.11 5.10 L4.14 3.98 L5.86 3.98 L5.89 5.10 L6.99 5.56 L7.80 4.78 L9.02 6.00 L8.24 6.81 L8.70 7.91 L9.82 7.94 L9.82 9.66 L8.70 9.69 L8.24 10.79 L9.02 11.60 L7.80 12.82 L6.99 12.04 L5.89 12.50 L5.86 13.62 L4.14 13.62 L4.11 12.50 L3.01 12.04 L2.20 12.82 L0.98 11.60 L1.76 10.79 L1.30 9.69 L0.18 9.66 L0.18 7.94 L1.30 7.91 L1.76 6.81 L0.98 6.00 L2.20 4.78 L3.01 5.56Z M6.70 8.80 A1.7 1.7 0 1 0 3.30 8.80 A1.7 1.7 0 1 0 6.70 8.80Z"/><circle cx="11.6" cy="3.3" r="2.2" fill="none" stroke="#fff" stroke-width="1.2"/></svg>
<div class="a" style="left:699.8px;top:1013.2px;width:4.3px;height:4.3px;border-radius:50%;background:#fff"></div>
<div class="a" style="left:699.8px;top:1018.2px;width:4.3px;height:4.3px;border-radius:50%;background:#fff"></div>
<div class="a" style="left:699.8px;top:1023.2px;width:4.3px;height:4.3px;border-radius:50%;background:#fff"></div>
  <!-- scene transitions -->
  <div class="btn" style="left:1093px;top:852px;width:293px;height:32px"></div>
  <div class="a" style="left:1362px;top:853px;width:1px;height:30px;background:#2c2f39"></div>
  <svg class="a" style="left:1369px;top:865px" width="11" height="7"><path d="M0 0H11L5.5 6Z" fill="#fff"/></svg>
  <div class="t" style="left:1102.5px;top:862px;font-size:12.6px">Fade</div>
  <div class="t" style="left:1093px;top:898px;font-size:13px;letter-spacing:0.35px">Duration</div>
  <div class="btn" style="left:1150px;top:888px;width:236px;height:32px"></div>
  <div class="a" style="left:1362px;top:889px;width:1px;height:30px;background:#2c2f39"></div>
  <div class="a" style="left:1363px;top:904px;width:22px;height:1px;background:#2c2f39"></div>
  <svg class="a" style="left:1368px;top:893px" width="12" height="7"><path d="M1.5 6L6 1.5L10.5 6" stroke="#fff" stroke-width="1.3" fill="none"/></svg>
  <svg class="a" style="left:1368px;top:908px" width="12" height="7"><path d="M1.5 1L6 5.5L10.5 1" stroke="#fff" stroke-width="1.3" fill="none"/></svg>
  <div class="t" style="left:1165px;top:898px;font-size:12.7px">300 ms</div>
  <div class="btn" style="left:1300px;top:922px;width:26px;height:28px"></div>
  <svg class="a" style="left:1305.5px;top:928px" width="15" height="15" viewBox="0 0 15 15"><path d="M7.5 1V14M1 7.5H14" stroke="#fff" stroke-width="1.8"/></svg>
  <svg class="a" style="left:1335.8px;top:928px" width="15.3" height="16" viewBox="0 0 16 16" preserveAspectRatio="none"><rect x="0.6" y="2" width="14.8" height="1.9" fill="#fff"/><rect x="5.6" y="0.6" width="4.8" height="1.8" rx="0.8" fill="#fff"/><path d="M2.4 4.2V12.6C2.4 14.2 3.4 15.1 5 15.1H11C12.6 15.1 13.6 14.2 13.6 12.6V4.2" stroke="#fff" stroke-width="1.7" fill="none"/><rect x="5.3" y="5.6" width="1.1" height="7" fill="#fff"/><rect x="7.45" y="5.6" width="1.1" height="7" fill="#fff"/><rect x="9.6" y="5.6" width="1.1" height="7" fill="#fff"/></svg>
  <div class="a" style="left:1370.8px;top:927.8px;width:4.3px;height:4.3px;border-radius:50%;background:#dcdee4"></div>
  <div class="a" style="left:1370.8px;top:933.8px;width:4.3px;height:4.3px;border-radius:50%;background:#dcdee4"></div>
  <div class="a" style="left:1370.8px;top:939.8px;width:4.3px;height:4.3px;border-radius:50%;background:#dcdee4"></div>

  <!-- controls -->
  <div class="cb" style="top:852px">Start Streaming</div>
  <div class="cb" style="top:888px">Start Recording</div>
  <div class="cb" style="top:924px;width:280px">Start Virtual Camera</div>
  <div class="btn" style="left:1686px;top:924px;width:32px;height:32px"></div>
  <svg class="a" style="left:1695px;top:933px" width="14" height="14" viewBox="0 0 14 14"><path fill="#fff" fill-rule="evenodd" d="M5.87 2.28 L5.92 0.95 L8.08 0.95 L8.13 2.28 L9.53 2.86 L10.52 1.95 L12.05 3.48 L11.14 4.47 L11.72 5.87 L13.05 5.92 L13.05 8.08 L11.72 8.13 L11.14 9.53 L12.05 10.52 L10.52 12.05 L9.53 11.14 L8.13 11.72 L8.08 13.05 L5.92 13.05 L5.87 11.72 L4.47 11.14 L3.48 12.05 L1.95 10.52 L2.86 9.53 L2.28 8.13 L0.95 8.08 L0.95 5.92 L2.28 5.87 L2.86 4.47 L1.95 3.48 L3.48 1.95 L4.47 2.86Z M9.40 7.00 A2.4 2.4 0 1 0 4.60 7.00 A2.4 2.4 0 1 0 9.40 7.00Z"/></svg>
  <div class="cb" style="top:960px">Studio Mode</div>
  <div class="cb" style="top:996px">Settings</div>

  <svg class="a" style="left:0;top:0" width="1726" height="1071"><path d="M199.7 725.8L211.1 734L155.2 814.2L178.7 831.3L105.2 870.6L118.4 788.3L142.5 805.2Z" fill="#ff2800"/></svg>
  <!-- status bar content -->
  <div class="a" style="left:0;top:1040px;width:1726px;height:31px;background:#272a33;border-top:1px solid #3a3d49"></div>
  <div class="sep" style="left:1311px;top:1041px;width:1px;height:30px"></div>
  <div class="sep" style="left:1342px;top:1041px;width:1px;height:30px"></div>
  <div class="sep" style="left:1427px;top:1041px;width:1px;height:30px"></div>
  <div class="sep" style="left:1512px;top:1041px;width:1px;height:30px"></div>
  <div class="sep" style="left:1586px;top:1041px;width:1px;height:30px"></div>
  <svg class="a" style="left:1318px;top:1047px" width="17" height="16" viewBox="0 0 17 16"><rect x="0.5" y="10" width="3" height="5" rx="0.8" fill="#54596b"/><rect x="4.8" y="7" width="3" height="8" rx="0.8" fill="#54596b"/><rect x="9.1" y="4" width="3" height="11" rx="0.8" fill="#54596b"/><rect x="13.4" y="0.5" width="3" height="14.5" rx="0.8" fill="#54596b"/></svg>
  <svg class="a" style="left:1349px;top:1047px" width="17" height="16" viewBox="0 0 17 16"><circle cx="8.5" cy="8" r="2.5" fill="#8c8f99"/><path d="M5.2 4.5C3.5 6.3 3.5 9.7 5.2 11.5M11.8 4.5C13.5 6.3 13.5 9.7 11.8 11.5M3.2 2.5C0.5 5.3 0.5 10.7 3.2 13.5M13.8 2.5C16.5 5.3 16.5 10.7 13.8 13.5" stroke="#54596b" stroke-width="1.2" fill="none"/></svg>
  <div class="t" style="left:1372.5px;top:1050px;font-size:12px;color:#9a9eab">00:00:00</div>
  <div class="a" style="left:1436px;top:1048px;width:14px;height:14px;border-radius:50%;background:#54596b"></div>
  <div class="t" style="left:1457.5px;top:1050px;font-size:12px;color:#9a9eab">00:00:00</div>
  <div class="t" style="left:1520.5px;top:1050px;font-size:11.8px">CPU: 0.3%</div>
  <div class="t" style="left:1594px;top:1050px;font-size:12.1px">30.00 / 30.00 FPS</div>
  <svg class="a" style="left:1713px;top:1059px" width="10" height="10" viewBox="0 0 10 10"><g fill="#c8ccd6"><rect x="7" y="1" width="2" height="2"/><rect x="4" y="4" width="2" height="2"/><rect x="7" y="4" width="2" height="2"/><rect x="1" y="7" width="2" height="2"/><rect x="4" y="7" width="2" height="2"/><rect x="7" y="7" width="2" height="2"/></g></svg>
</div>
<div class="a" style="left:0;top:0;width:1726px;height:1071px;border:1px solid #3c3e47;border-radius:8px"></div>
</body></html>
